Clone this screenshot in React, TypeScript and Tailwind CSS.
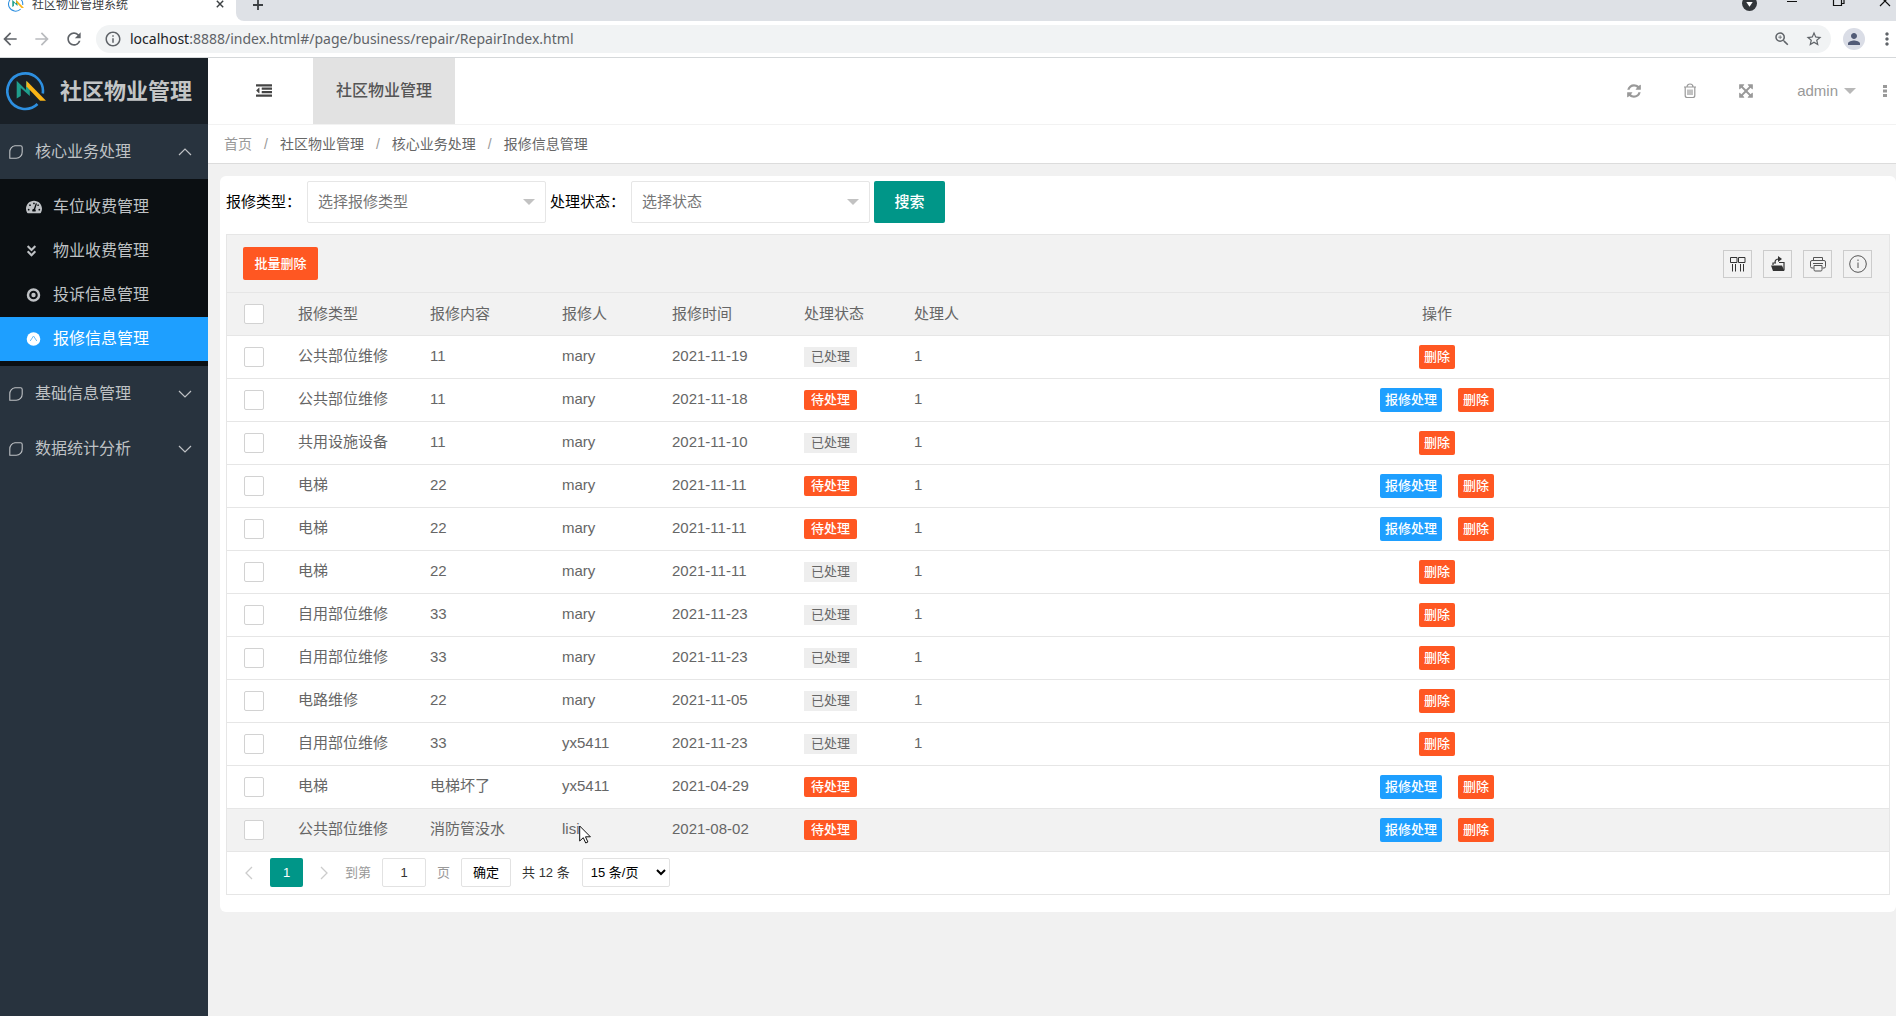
import { FaTachometerAlt, FaAngleDoubleDown } from 'react-icons/fa';
import { MdOutlineZoomIn, MdPerson, MdStarBorder, MdMoreVert, MdArrowBack, MdArrowForward, MdRefresh, MdInfoOutline } from 'react-icons/md';

type Repair = {
  type: string;
  content: string;
  person: string;
  date: string;
  done: boolean;
  handler: string;
};

const ROWS: Repair[] = [
  { type: '公共部位维修', content: '11', person: 'mary', date: '2021-11-19', done: true, handler: '1' },
  { type: '公共部位维修', content: '11', person: 'mary', date: '2021-11-18', done: false, handler: '1' },
  { type: '共用设施设备', content: '11', person: 'mary', date: '2021-11-10', done: true, handler: '1' },
  { type: '电梯', content: '22', person: 'mary', date: '2021-11-11', done: false, handler: '1' },
  { type: '电梯', content: '22', person: 'mary', date: '2021-11-11', done: false, handler: '1' },
  { type: '电梯', content: '22', person: 'mary', date: '2021-11-11', done: true, handler: '1' },
  { type: '自用部位维修', content: '33', person: 'mary', date: '2021-11-23', done: true, handler: '1' },
  { type: '自用部位维修', content: '33', person: 'mary', date: '2021-11-23', done: true, handler: '1' },
  { type: '电路维修', content: '22', person: 'mary', date: '2021-11-05', done: true, handler: '1' },
  { type: '自用部位维修', content: '33', person: 'yx5411', date: '2021-11-23', done: true, handler: '1' },
  { type: '电梯', content: '电梯坏了', person: 'yx5411', date: '2021-04-29', done: false, handler: '' },
  { type: '公共部位维修', content: '消防管没水', person: 'lisi', date: '2021-08-02', done: false, handler: '' },
];

const HEADERS = ['报修类型', '报修内容', '报修人', '报修时间', '处理状态', '处理人'];

function Logo({ className }: { className: string }) {
  return (
    <svg viewBox="0 0 40 40" className={className} fill="none" aria-hidden="true">
      <path d="M31.500 33A17.800 17.800 0 1 1 36.800 22.500" stroke="#2d8fe0" strokeWidth="2.600" />
      <path d="M10.700 27.500V9.700L20 19V10l3.800 3.500V25L14.800 17v8z" fill="#1f9e8c" />
      <path d="M20.500 9.700L40 29.800h-6L20.500 15.500z" fill="#fbb416" />
    </svg>
  );
}

function LeafIcon() {
  return (
    <svg viewBox="0 0 14 14" className="size-3.5 shrink-0" fill="none" stroke="currentColor" strokeWidth="1.1" aria-hidden="true">
      <path d="M6 .8h5.500q1.700 0 1.700 1.700V7a6 6 0 0 1-6 6.200H.8V7A6 6 0 0 1 6 .8z" />
    </svg>
  );
}

function Chevron({ up = false }: { up?: boolean }) {
  return (
    <svg viewBox="0 0 14 8" className="ml-auto h-2 w-3.5" fill="none" stroke="currentColor" strokeWidth="1.2" aria-hidden="true">
      <path d={up ? 'M1 7l6-6 6 6' : 'M1 1l6 6 6-6'} />
    </svg>
  );
}

// Font Awesome 4 shapes, all on the 1792 grid
const FA = {
  outdent:
    'M384 544v576q0 13-9.500 22.500t-22.500 9.500q-14 0-23-9l-288-288q-9-9-9-23t9-23l288-288q9-9 23-9 13 0 22.500 9.500t9.500 22.500zM32 1280h1728q32 0 32 32v192q0 32-32 32h-1728q-32 0-32-32v-192q0-32 32-32zM672 896h1088q32 0 32 32v192q0 32-32 32h-1088q-32 0-32-32v-192q0-32 32-32zM672 512h1088q32 0 32 32v192q0 32-32 32h-1088q-32 0-32-32v-192q0-32 32-32zM32 128h1728q32 0 32 32v192q0 32-32 32h-1728q-32 0-32-32v-192q0-32 32-32z',
  refresh:
    'M1639 1056q0 5-1 7-64 268-268 434.500t-478 166.500q-146 0-282.500-55t-243.500-157l-129 129q-19 19-45 19t-45-19-19-45v-448q0-26 19-45t45-19h448q26 0 45 19t19 45-19 45l-137 137q71 66 161 102t187 36q134 0 250-65t186-179q11-17 53-117 8-23 30-23h192q13 0 22.500 9.500t9.500 22.500zm25-800v448q0 26-19 45t-45 19h-448q-26 0-45-19t-19-45 19-45l138-138q-148-137-349-137-134 0-250 65t-186 179q-11 17-53 117-8 23-30 23h-199q-13 0-22.500-9.500t-9.500-22.500v-7q65-268 270-434.500t480-166.500q146 0 284 55.500t245 156.500l130-129q19-19 45-19t45 19 19 45z',
  arrows:
    'M1411 541l-355 355 355 355 144-144q29-31 70-14 39 17 39 59v448q0 26-19 45t-45 19h-448q-42 0-59-40-17-39 14-69l144-144-355-355-355 355 144 144q31 30 14 69-17 40-59 40h-448q-26 0-45-19t-19-45v-448q0-42 40-59 39-17 69 14l144 144 355-355-355-355-144 144q-19 19-45 19-12 0-24-5-40-17-40-59v-448q0-26 19-45t45-19h448q42 0 59 40 17 39-14 69l-144 144 355 355 355-355-144-144q-31-30-14-69 17-40 59-40h448q26 0 45 19t19 45v448q0 42-39 59-13 5-25 5-26 0-45-19z',
};

function FaIcon({ d, className }: { d: string; className: string }) {
  return (
    <svg viewBox="0 0 1792 1792" className={className} fill="currentColor" aria-hidden="true">
      <path d={d} />
    </svg>
  );
}

function BrowserChrome() {
  return (
    <div className="border-b border-[#d5d8da] bg-white">
      <div className="flex h-[21px] items-start overflow-hidden">
        <div className="flex h-full w-[236px] items-start pl-2 text-[#3c4043]">
          <Logo className="-mt-1 size-4 shrink-0" />
          <span className="-mt-px ml-2 text-xs leading-3">社区物业管理系统</span>
          <svg viewBox="0 0 10 10" className="mr-3 ml-auto size-2" stroke="#3c4043" strokeWidth="1.800" aria-hidden="true">
            <path d="M1 1l8 8M9 1L1 9" />
          </svg>
        </div>
        <div className="flex h-full flex-1 items-start rounded-bl-lg bg-[#dee1e6] pl-4 text-[#111]">
          <svg viewBox="0 0 12 12" className="size-3" stroke="#3c4043" strokeWidth="1.800" aria-hidden="true">
            <path d="M6 0v10M1 5h10" />
          </svg>
          <svg viewBox="0 0 14 14" className="-mt-1 ml-auto size-[15px]" aria-hidden="true">
            <circle cx="7" cy="7" r="7" fill="#33373b" />
            <path d="M4 5.500h6L7 10z" fill="#fff" />
          </svg>
          <svg viewBox="0 0 109 10" className="ml-[30px] h-2.5 w-[109px]" fill="none" stroke="currentColor" strokeWidth="1.200" aria-hidden="true">
            <path d="M0 1.500h10M46.500-1v6.500h8V-1M55 3.500h2V-1M93-4l10 10M103-4L93 6" />
          </svg>
        </div>
      </div>
      <div className="flex h-9 items-center text-[#5f6368]">
        <MdArrowBack className="size-5 shrink-0" />
        <MdArrowForward className="ml-3 size-5 shrink-0 text-[#b9bbbe]" />
        <MdRefresh className="ml-3 size-5 shrink-0" />
        <div className="ml-3 flex h-7 flex-1 items-center rounded-full bg-[#f1f3f4] pr-2 pl-2">
          <MdInfoOutline className="size-[18px]" />
          <span className="ml-2 font-['Noto_Sans'] text-sm">
            <span className="text-[#202124]">localhost</span>:8888/index.html#/page/business/repair/RepairIndex.html
          </span>
          <MdOutlineZoomIn className="ml-auto size-[18px]" />
          <MdStarBorder className="ml-3.5 size-[18px]" />
        </div>
        <span className="ml-3 flex size-[22px] items-center justify-center rounded-full bg-[#dadde6]">
          <MdPerson className="size-[18px] text-[#525b77]" />
        </span>
        <MdMoreVert className="-mr-px ml-3 size-5" />
      </div>
    </div>
  );
}

function Sidebar() {
  const sub = 'flex h-11 items-center gap-[11px] pl-[26px]';
  const group = 'flex h-[55px] items-center gap-3 pr-4 pl-[9px]';
  return (
    <nav className="w-52 shrink-0 bg-[#28333e] text-base text-[#bfc2c5]">
      <div className="flex h-[66px] items-center gap-3.5 bg-[#192027] pl-1.5">
        <Logo className="size-10" />
        <h1 className="text-[22px] font-bold text-[#c3c5c6]">社区物业管理</h1>
      </div>
      <a href="#core" className={group}>
        <LeafIcon />
        核心业务处理
        <Chevron up />
      </a>
      <div className="bg-[#0b0f12] pt-1.5 pb-[5px]">
        <a href="#parking" className={sub}>
          <FaTachometerAlt className="size-4" />
          车位收费管理
        </a>
        <a href="#fee" className={sub}>
          <FaAngleDoubleDown className="size-4 p-px pr-1.5" />
          物业收费管理
        </a>
        <a href="#complaint" className={sub}>
          <svg viewBox="0 0 16 16" className="size-4" fill="none" aria-hidden="true">
            <circle cx="7.500" cy="8" r="5.500" stroke="currentColor" strokeWidth="2.500" />
            <circle cx="7.500" cy="8" r="2.200" fill="currentColor" />
          </svg>
          投诉信息管理
        </a>
        <a href="#repair" className="flex h-11 items-center gap-[11px] bg-[#1e9fff] pl-[26px] text-white">
          <svg viewBox="0 0 16 16" className="size-4" fill="none" aria-hidden="true">
            <circle cx="7.500" cy="8" r="6.800" fill="currentColor" />
            <path d="M4.200 10l3.300-5 3.300 5" stroke="#6bbcf8" />
          </svg>
          报修信息管理
        </a>
      </div>
      <a href="#base" className={group}>
        <LeafIcon />
        基础信息管理
        <Chevron />
      </a>
      <a href="#stats" className={group}>
        <LeafIcon />
        数据统计分析
        <Chevron />
      </a>
    </nav>
  );
}

function Topbar() {
  return (
    <header className="flex h-[67px] items-center border-b border-[#f2f2f2] bg-white text-[#999]">
      <button aria-label="折叠菜单" className="ml-12 text-[#444]">
        <FaIcon d={FA.outdent} className="size-4" />
      </button>
      <a href="#home" className="ml-[41px] flex h-full items-center bg-[#e2e2e2] px-[23px] text-base font-medium text-[#555]">
        社区物业管理
      </a>
      <button aria-label="刷新" className="ml-auto">
        <FaIcon d={FA.refresh} className="size-4" />
      </button>
      <button aria-label="清理" className="ml-10">
        <svg viewBox="0 0 16 16" className="size-4" fill="none" stroke="currentColor" strokeWidth="1.200" aria-hidden="true">
          <path d="M2 4h12M5 4c0-4 6-4 6 0M3.200 4v8.500q0 2 2 2h5.600q2 0 2-2V4M6 6.500v5.500M8 6.500v5.500M10 6.500v5.500" />
        </svg>
      </button>
      <button aria-label="全屏" className="ml-10">
        <FaIcon d={FA.arrows} className="size-4" />
      </button>
      <button className="ml-[43px] flex items-center gap-1.5 text-[15px]">
        admin
        <svg viewBox="0 0 12 6" className="h-1.5 w-3" fill="#b8b8b8" aria-hidden="true">
          <path d="M0 0h12L6 6z" />
        </svg>
      </button>
      <button aria-label="更多" className="mr-[9px] ml-[27px]">
        <svg viewBox="0 0 4 14" className="h-3.5 w-1" fill="currentColor" aria-hidden="true">
          <path d="M0 1h4v3H0zM0 5.500h4v3H0zM0 10h4v3H0z" />
        </svg>
      </button>
    </header>
  );
}

function Breadcrumb() {
  return (
    <div className="flex h-[39px] items-center gap-3 border-b border-[#dcdcdc] bg-white pl-4 text-sm text-[#666]">
      <a href="#home" className="text-[#999]">首页</a>
      <span className="text-[#999]">/</span>
      <a href="#community">社区物业管理</a>
      <span className="text-[#999]">/</span>
      <a href="#core">核心业务处理</a>
      <span className="text-[#999]">/</span>
      <a href="#repair">报修信息管理</a>
    </div>
  );
}

function FilterSelect({ id, label, placeholder }: { id: string; label: string; placeholder: string }) {
  return (
    <div className="flex items-center">
      <label htmlFor={id} className="w-[81px] text-[15px] text-black">
        {label}：
      </label>
      <div className="relative">
        <select id={id} className="h-[42px] w-[239px] appearance-none rounded-xs border border-[#e6e6e6] bg-white px-2.5 text-[15px] text-[#757575]">
          <option>{placeholder}</option>
        </select>
        <svg viewBox="0 0 12 6" className="pointer-events-none absolute top-[18px] right-[11px] h-1.5 w-3" fill="#c2c2c2" aria-hidden="true">
          <path d="M0 0h12L6 6z" />
        </svg>
      </div>
    </div>
  );
}

function ToolIcons() {
  const box = 'flex h-7 w-[29px] items-center justify-center border border-[#ccc] text-[#333]';
  return (
    <div className="flex gap-[11px]">
      <button aria-label="筛选列" className={box}>
        <svg viewBox="0 0 16 16" className="size-4" fill="none" stroke="currentColor" aria-hidden="true">
          <path d="M.5 1.500h6.500v5H.5zM8.500 1.500H15v5H8.500zM2.500 8v7.500M5.500 8v7.500M10.500 8v7.500M13.500 8v7.500" />
        </svg>
      </button>
      <button aria-label="导出" className={box}>
        <svg viewBox="0 0 16 16" className="size-4" aria-hidden="true">
          <path d="M1 9.500h11l2.500 5.500H3z" fill="currentColor" />
          <path d="M9 6.500h5v7.500M3 9V7h3M5 6.500q0-3.500 4-3.500" fill="none" stroke="currentColor" strokeWidth="1.200" />
          <path d="M8 0l4 3-4 3z" fill="currentColor" />
        </svg>
      </button>
      <button aria-label="打印" className={box}>
        <svg viewBox="0 0 16 16" className="size-4" fill="none" stroke="#555" aria-hidden="true">
          <path d="M3.500 4.500v-3h9v3M3.500 12H2q-1.500 0-1.500-1.500V6q0-1.500 1.500-1.500h12q1.500 0 1.500 1.500v4.500q0 1.500-1.500 1.500h-1.500M4 9.500h8v4q0 1.500-1 1.500H5q-1 0-1-1.500zM3 7.500h10" />
        </svg>
      </button>
      <button aria-label="提示" className={box}>
        <svg viewBox="0 0 18 18" className="size-[18px]" fill="none" stroke="#555" aria-hidden="true">
          <circle cx="9" cy="9" r="8.300" />
          <path d="M9 7.500V13M9 4.500V6" />
        </svg>
      </button>
    </div>
  );
}

function CheckBox({ label }: { label: string }) {
  return (
    <input
      type="checkbox"
      aria-label={label}
      className="block size-5 appearance-none rounded-xs border border-[#d2d2d2] bg-white checked:bg-[#5fb878]"
    />
  );
}

function RepairTable() {
  const action = 'h-6 rounded-xs px-[5px] text-[13px] leading-6 font-medium text-white';
  return (
    <table className="w-full table-fixed border-collapse text-left text-[15px] text-[#666]">
      <colgroup>
        <col className="w-[54px]" />
        <col className="w-[132px]" />
        <col className="w-[132px]" />
        <col className="w-[110px]" />
        <col className="w-[132px]" />
        <col className="w-[110px]" />
        <col className="w-[88px]" />
        <col />
      </colgroup>
      <thead>
        <tr className="h-[42px] border-b border-[#e6e6e6] bg-[#f2f2f2]">
          <th className="pl-[17px]">
            <CheckBox label="全选" />
          </th>
          {HEADERS.map((h) => (
            <th key={h} className="pl-[17px] font-normal">{h}</th>
          ))}
          <th className="text-center font-normal">操作</th>
        </tr>
      </thead>
      <tbody>
        {ROWS.map((r, i) => (
          <tr key={i} className="h-[43px] border-b border-[#e6e6e6] last:bg-[#f2f2f2]">
            <td className="pl-[17px]">
              <CheckBox label={`选择第 ${i + 1} 行`} />
            </td>
            <td className="pl-[17px]">{r.type}</td>
            <td className="pl-[17px]">{r.content}</td>
            <td className="pl-[17px]">{r.person}</td>
            <td className="pl-[17px]">{r.date}</td>
            <td className="pl-[17px]">
              {r.done ? (
                <span className="block h-5 w-fit bg-[#eee] px-[7px] text-[13px] leading-5">已处理</span>
              ) : (
                <span className="block h-5 w-fit rounded-xs bg-[#ff5722] px-[7px] text-[13px] leading-5 font-medium text-white">待处理</span>
              )}
            </td>
            <td className="pl-[17px]">{r.handler}</td>
            <td>
              <div className="flex justify-center gap-4">
                {!r.done && <button className={`${action} bg-[#1e9fff]`}>报修处理</button>}
                <button className={`${action} bg-[#ff5722]`}>删除</button>
              </div>
            </td>
          </tr>
        ))}
      </tbody>
    </table>
  );
}

function Pager() {
  return (
    <div className="flex h-[42px] items-center pl-[18px] text-[13px] text-[#999]">
      <button aria-label="上一页">
        <svg viewBox="0 0 8 14" className="h-3.5 w-2" fill="none" stroke="#ccc" strokeWidth="1.300" aria-hidden="true">
          <path d="M7 1L1 7l6 6" />
        </svg>
      </button>
      <button className="ml-[17px] h-[29px] w-[33px] rounded-xs bg-[#009688] font-medium text-white">1</button>
      <button aria-label="下一页" className="ml-[17px]">
        <svg viewBox="0 0 8 14" className="h-3.5 w-2" fill="none" stroke="#ccc" strokeWidth="1.300" aria-hidden="true">
          <path d="M1 1l6 6-6 6" />
        </svg>
      </button>
      <label htmlFor="page" className="ml-[17px]">到第</label>
      <input id="page" defaultValue="1" className="mx-[11px] h-[29px] w-11 rounded-xs border border-[#e2e2e2] text-center text-[#333]" />
      <span>页</span>
      <button className="ml-[11px] h-[29px] w-[50px] rounded-xs border border-[#e2e2e2] text-black">确定</button>
      <span className="ml-[11px] text-[#333]">共 12 条</span>
      <select aria-label="每页条数" className="ml-3 h-[29px] w-[88px] rounded-xs border border-[#e2e2e2] bg-white px-1 text-black">
        <option>15 条/页</option>
      </select>
    </div>
  );
}

export default function App() {
  return (
    <div className="flex h-screen flex-col overflow-hidden font-['Liberation_Sans','Noto_Sans_CJK_SC',sans-serif]">
      <BrowserChrome />
      <div className="flex min-h-0 flex-1">
        <Sidebar />
        <div className="relative min-w-0 flex-1 bg-[#f1f1f1]">
          <Topbar />
          <Breadcrumb />
          <main className="mt-3 ml-3 rounded-md bg-white pt-[5px] pr-[6px] pb-[17px] pl-1.5">
            <form className="flex gap-1" onSubmit={(e) => e.preventDefault()}>
              <FilterSelect id="repair-type" label="报修类型" placeholder="选择报修类型" />
              <FilterSelect id="repair-status" label="处理状态" placeholder="选择状态" />
              <button className="h-[42px] w-[71px] rounded-xs bg-[#009688] text-[15px] font-medium text-white">搜索</button>
            </form>
            <section className="mt-[11px] border border-[#e6e6e6]">
              <div className="flex h-[58px] items-center justify-between border-b border-[#e6e6e6] bg-[#f2f2f2] pr-[17px] pl-4">
                <button className="h-[33px] w-[75px] rounded-xs bg-[#ff5722] text-[13px] font-medium text-white">批量删除</button>
                <ToolIcons />
              </div>
              <RepairTable />
              <Pager />
            </section>
          </main>
          <svg viewBox="0 0 12 19" className="absolute top-[767px] left-[371px] h-[19px] w-3" fill="#fff" stroke="#111" aria-hidden="true">
            <path d="M.7 1v15l3.600-3.300 2.400 5.300 2.200-1-2.400-5.200h4.900z" />
          </svg>
        </div>
      </div>
    </div>
  );
}
